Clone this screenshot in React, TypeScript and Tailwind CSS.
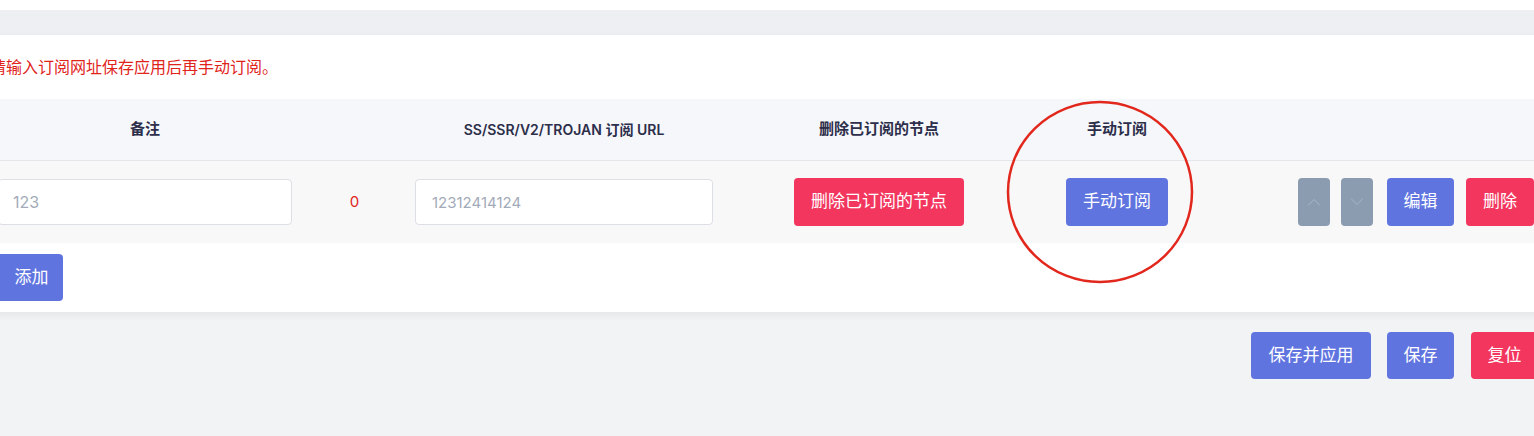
import React from 'react'

const font = { fontFamily: 'Inter, "Noto Sans CJK SC", sans-serif' }

function Chevron({ up }: { up?: boolean }) {
  return (
    <svg viewBox="0 0 14 8" className="w-[14px] h-[8px]" fill="none" stroke="#a9b5c6" strokeWidth="1">
      {up ? <path d="M1 7.5 7 1.5l6 6" /> : <path d="M1 0.5l6 6 6-6" />}
    </svg>
  )
}

export default function App() {
  return (
    <div className="relative w-[1534px] h-[436px] overflow-hidden bg-[#f2f3f5]" style={font}>
      {/* top strip */}
      <div className="h-[10px] bg-white" />
      <div className="h-[25px] bg-[#eeeff2]" />

      {/* Card */}
      <div className="-ml-[20px] w-[1600px] bg-white shadow-[0_3px_8px_rgba(0,0,0,0.06)] px-[8px]">
        <div className="h-[64px] flex items-center pl-[2px] text-[16px] text-[#e0241b]">
          请输入订阅网址保存应用后再手动订阅。
        </div>

        <div className="grid grid-cols-[314px_103px_318px_312px_164px_347px]">
          {/* header */}
          <div className="contents text-[15px] font-semibold text-[#2c2e4a]">
            <div className="h-[62px] flex items-center justify-center bg-[#f5f7fa] border-b border-[#e4e6ea]">备注</div>
            <div className="h-[62px] bg-[#f5f7fa] border-b border-[#e4e6ea]" />
            <div className="h-[62px] flex items-center justify-center bg-[#f5f7fa] border-b border-[#e4e6ea] text-[14px]">SS/SSR/V2/TROJAN 订阅 URL</div>
            <div className="h-[62px] flex items-center justify-center bg-[#f5f7fa] border-b border-[#e4e6ea]">删除已订阅的节点</div>
            <div className="h-[62px] flex items-center justify-center bg-[#f5f7fa] border-b border-[#e4e6ea]">手动订阅</div>
            <div className="h-[62px] bg-[#f5f7fa] border-b border-[#e4e6ea]" />
          </div>

          {/* row */}
          <div className="h-[82px] flex items-center px-[10px] bg-[#f8f8f8]">
            <input
              className="w-full h-[46px] rounded-[4px] border border-[#dcdfe6] bg-white pl-[14px] text-[16px] outline-none placeholder:text-[#a3abb9]"
              placeholder="123"
            />
          </div>
          <div className="h-[82px] flex items-center justify-center bg-[#f8f8f8] text-[15px] text-[#e0241b] pl-[2px]">0</div>
          <div className="h-[82px] flex items-center px-[10px] bg-[#f8f8f8]">
            <input
              className="w-full h-[46px] rounded-[4px] border border-[#dcdfe6] bg-white pl-[16px] text-[15px] outline-none placeholder:text-[#a3abb9]"
              placeholder="12312414124"
            />
          </div>
          <div className="h-[82px] flex items-center justify-center bg-[#f8f8f8]">
            <button className="h-[48px] px-[17px] rounded-[4px] bg-[#f3365e] text-white text-[17px]">删除已订阅的节点</button>
          </div>
          <div className="h-[82px] flex items-center justify-center bg-[#f8f8f8]">
            <button className="h-[48px] px-[17px] rounded-[4px] bg-[#6074e0] text-white text-[17px]">手动订阅</button>
          </div>
          <div className="h-[82px] flex items-center bg-[#f8f8f8] pl-[99px] gap-[11px]">
            <button className="w-[32px] h-[48px] rounded-[4px] bg-[#8b9bb0] flex items-center justify-center"><Chevron up /></button>
            <button className="w-[32px] h-[48px] rounded-[4px] bg-[#8b9bb0] flex items-center justify-center mr-[3px]"><Chevron /></button>
            <button className="h-[48px] w-[67px] rounded-[4px] bg-[#6074e0] text-white text-[17px]">编辑</button>
            <button className="h-[48px] w-[68px] rounded-[4px] bg-[#f3365e] text-white text-[17px] ml-[1px]">删除</button>
          </div>
        </div>

        <div className="h-[69px] flex items-center">
          <button className="h-[47px] w-[71px] ml-[4px] pl-[8px] rounded-[4px] bg-[#6074e0] text-white text-[17px]">添加</button>
        </div>
      </div>

      {/* bottom actions */}
      <div className="mt-[20px] flex justify-start pl-[1251px] gap-[16px] w-[1600px]">
        <button className="h-[47px] w-[120px] rounded-[4px] bg-[#6074e0] text-white text-[17px]">保存并应用</button>
        <button className="h-[47px] w-[67px] rounded-[4px] bg-[#6074e0] text-white text-[17px]">保存</button>
        <button className="h-[47px] w-[67px] ml-[1px] rounded-[4px] bg-[#f3365e] text-white text-[17px]">复位</button>
      </div>

      {/* annotation */}
      <svg className="absolute left-[1006px] top-[100px] w-[190px] h-[186px] pointer-events-none" viewBox="0 0 190 186" fill="none">
        <ellipse cx="94" cy="92" rx="92" ry="90" stroke="#e2271d" strokeWidth="2.5" />
      </svg>
    </div>
  )
}
